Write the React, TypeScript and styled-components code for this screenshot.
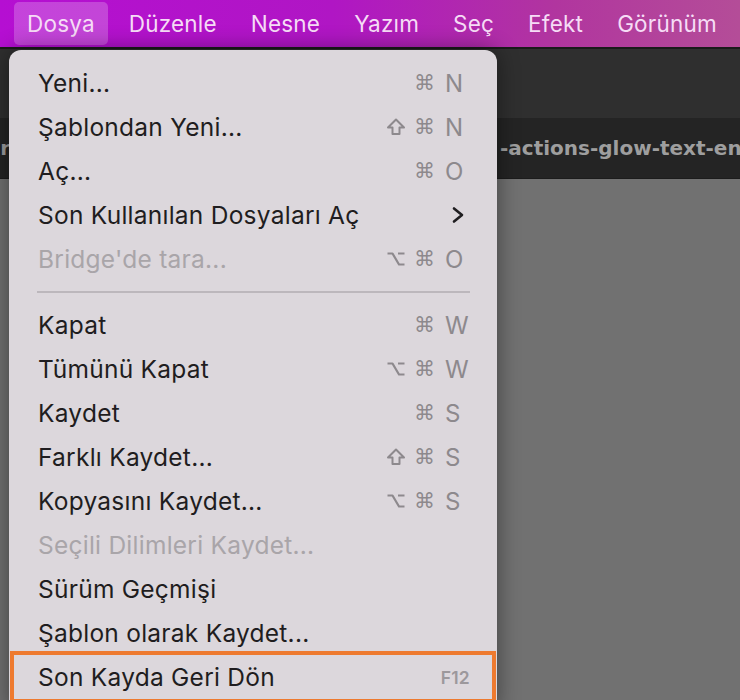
import * as React from 'react'
import styled, { createGlobalStyle } from 'styled-components'

const GlobalStyle = createGlobalStyle`
  html, body {
    margin: 0;
    padding: 0;
    background: #2e2e2e;
  }
  body {
    font-family: Inter, "Noto Sans", sans-serif;
  }
`

const Screen = styled.div`
  position: relative;
  width: 740px;
  height: 700px;
  overflow: hidden;
  display: flex;
  flex-direction: column;
`

const MenuBar = styled.div`
  height: 47px;
  flex: none;
  display: flex;
  align-items: center;
  gap: 8px;
  padding-left: 14px;
  background: linear-gradient(90deg, #b50fd2 0%, #b016c4 45%, #b1359f 75%, #b44d98 100%);
  border-bottom: 2px solid #1a1a1a;
`

const BarItem = styled.div<{ $active?: boolean }>`
  height: 43px;
  display: flex;
  align-items: center;
  padding: 0 13px;
  border-radius: 5px;
  font-size: 22.5px;
  letter-spacing: 0.2px;
  color: #f6dcf6;
  background: ${(p) => (p.$active ? 'rgba(255, 255, 255, 0.22)' : 'transparent')};
`

const Toolbar = styled.div`
  height: 69px;
  flex: none;
  background: #2f2f2f;
`

const TabBar = styled.div`
  height: 60px;
  flex: none;
  display: grid;
  grid-template-columns: 10px 490px 1fr;
  align-items: center;
  background: #242424;
  border-bottom: 1px solid #1c1c1c;
`

const TabLabel = styled.div<{ $alignEnd?: boolean }>`
  display: flex;
  justify-content: ${(p) => (p.$alignEnd ? 'flex-end' : 'flex-start')};
  overflow: hidden;
  white-space: nowrap;
  font-family: "DejaVu Sans", sans-serif;
  font-weight: bold;
  font-size: 20px;
  color: #9e9e9e;
`

const Canvas = styled.div`
  flex: 1;
  background: #717171;
`

const Menu = styled.div`
  position: absolute;
  left: 9px;
  top: 50px;
  width: 488px;
  height: 660px;
  padding-top: 11px;
  box-sizing: border-box;
  background: #dcd7dc;
  border-radius: 12px 12px 0 0;
  box-shadow: 0 0 22px rgba(0, 0, 0, 0.45);
`

const Row = styled.div<{ $disabled?: boolean }>`
  position: relative;
  height: 44px;
  display: flex;
  align-items: center;
  justify-content: space-between;
  padding: 0 30px 0 29px;
  font-size: 24.5px;
  letter-spacing: 0.25px;
  color: ${(p) => (p.$disabled ? '#a9a5a9' : '#1f1d20')};
`

const Separator = styled.div`
  height: 22px;
  display: flex;
  align-items: center;
  padding: 0 27px 0 28px;

  &::after {
    content: '';
    flex: 1;
    height: 2px;
    background: #bcb7bc;
  }
`

const Shortcut = styled.div`
  display: flex;
  align-items: center;
  gap: 8px;
  color: #8d898d;
`

const Glyph = styled.span`
  font-family: "DejaVu Sans", sans-serif;
  font-size: 21px;
  width: 19px;
  text-align: center;
`

const ModIcon = styled.svg`
  width: 20px;
  height: 20px;
`

const Key = styled.span`
  width: 22px;
  margin-left: 4px;
  font-size: 24px;
`

const FKey = styled.span`
  font-size: 17.5px;
  font-weight: 600;
  color: #9c989c;
  margin-right: -3px;
`

const Chevron = styled.svg`
  width: 14px;
  height: 18px;
  margin-right: 2px;
`

const Highlight = styled.div`
  position: absolute;
  left: 1px;
  right: 1px;
  top: -4px;
  bottom: -4px;
  border: 4px solid #ee7a2f;
  pointer-events: none;
`

type Mod = 'cmd' | 'shift' | 'opt'

type Item = {
  label: string
  mods?: Mod[]
  key?: string
  fkey?: string
  submenu?: boolean
  disabled?: boolean
  highlight?: boolean
}

const groups: Item[][] = [
  [
    { label: 'Yeni...', mods: ['cmd'], key: 'N' },
    { label: 'Şablondan Yeni...', mods: ['shift', 'cmd'], key: 'N' },
    { label: 'Aç...', mods: ['cmd'], key: 'O' },
    { label: 'Son Kullanılan Dosyaları Aç', submenu: true },
    { label: "Bridge'de tara...", mods: ['opt', 'cmd'], key: 'O', disabled: true },
  ],
  [
    { label: 'Kapat', mods: ['cmd'], key: 'W' },
    { label: 'Tümünü Kapat', mods: ['opt', 'cmd'], key: 'W' },
    { label: 'Kaydet', mods: ['cmd'], key: 'S' },
    { label: 'Farklı Kaydet...', mods: ['shift', 'cmd'], key: 'S' },
    { label: 'Kopyasını Kaydet...', mods: ['opt', 'cmd'], key: 'S' },
    { label: 'Seçili Dilimleri Kaydet...', disabled: true },
    { label: 'Sürüm Geçmişi' },
    { label: 'Şablon olarak Kaydet...' },
    { label: 'Son Kayda Geri Dön', fkey: 'F12', highlight: true },
  ],
]

const barItems = ['Dosya', 'Düzenle', 'Nesne', 'Yazım', 'Seç', 'Efekt', 'Görünüm']

const ModGlyph = ({ mod }: { mod: Mod }) => {
  if (mod === 'shift') {
    return (
      <ModIcon viewBox="0 0 20 20">
        <path
          d="M10 2.5 L18 10.5 L13.5 10.5 L13.5 17 L6.5 17 L6.5 10.5 L2 10.5 Z"
          fill="none"
          stroke="currentColor"
          strokeWidth="2"
          strokeLinejoin="round"
        />
      </ModIcon>
    )
  }
  if (mod === 'opt') {
    return (
      <ModIcon viewBox="0 0 20 20">
        <path
          d="M1.5 4.5 H6.5 L13 15.5 H18.5 M12 4.5 H18.5"
          fill="none"
          stroke="currentColor"
          strokeWidth="2.2"
          strokeLinejoin="round"
        />
      </ModIcon>
    )
  }
  return <Glyph>⌘</Glyph>
}

const MenuRow = ({ item }: { item: Item }) => (
  <Row $disabled={item.disabled}>
    <span>{item.label}</span>
    {item.key && (
      <Shortcut>
        {item.mods?.map((m) => <ModGlyph key={m} mod={m} />)}
        <Key>{item.key}</Key>
      </Shortcut>
    )}
    {item.fkey && (
      <Shortcut>
        <FKey>{item.fkey}</FKey>
      </Shortcut>
    )}
    {item.submenu && (
      <Chevron viewBox="0 0 14 18">
        <path d="M3 2.5 L11 9 L3 15.5" fill="none" stroke="#1f1d20" strokeWidth="2.6" strokeLinecap="round" strokeLinejoin="round" />
      </Chevron>
    )}
    {item.highlight && <Highlight />}
  </Row>
)

const App = () => (
  <>
    <GlobalStyle />
    <Screen>
      <MenuBar>
        {barItems.map((name, i) => (
          <BarItem key={name} $active={i === 0}>
            {name}
          </BarItem>
        ))}
      </MenuBar>
      <Toolbar />
      <TabBar>
        <TabLabel $alignEnd>er</TabLabel>
        <span />
        <TabLabel>-actions-glow-text-en</TabLabel>
      </TabBar>
      <Canvas />
      <Menu>
        {groups.map((group, gi) => (
          <React.Fragment key={gi}>
            {gi > 0 && <Separator />}
            {group.map((item) => (
              <MenuRow key={item.label} item={item} />
            ))}
          </React.Fragment>
        ))}
      </Menu>
    </Screen>
  </>
)

export default App
